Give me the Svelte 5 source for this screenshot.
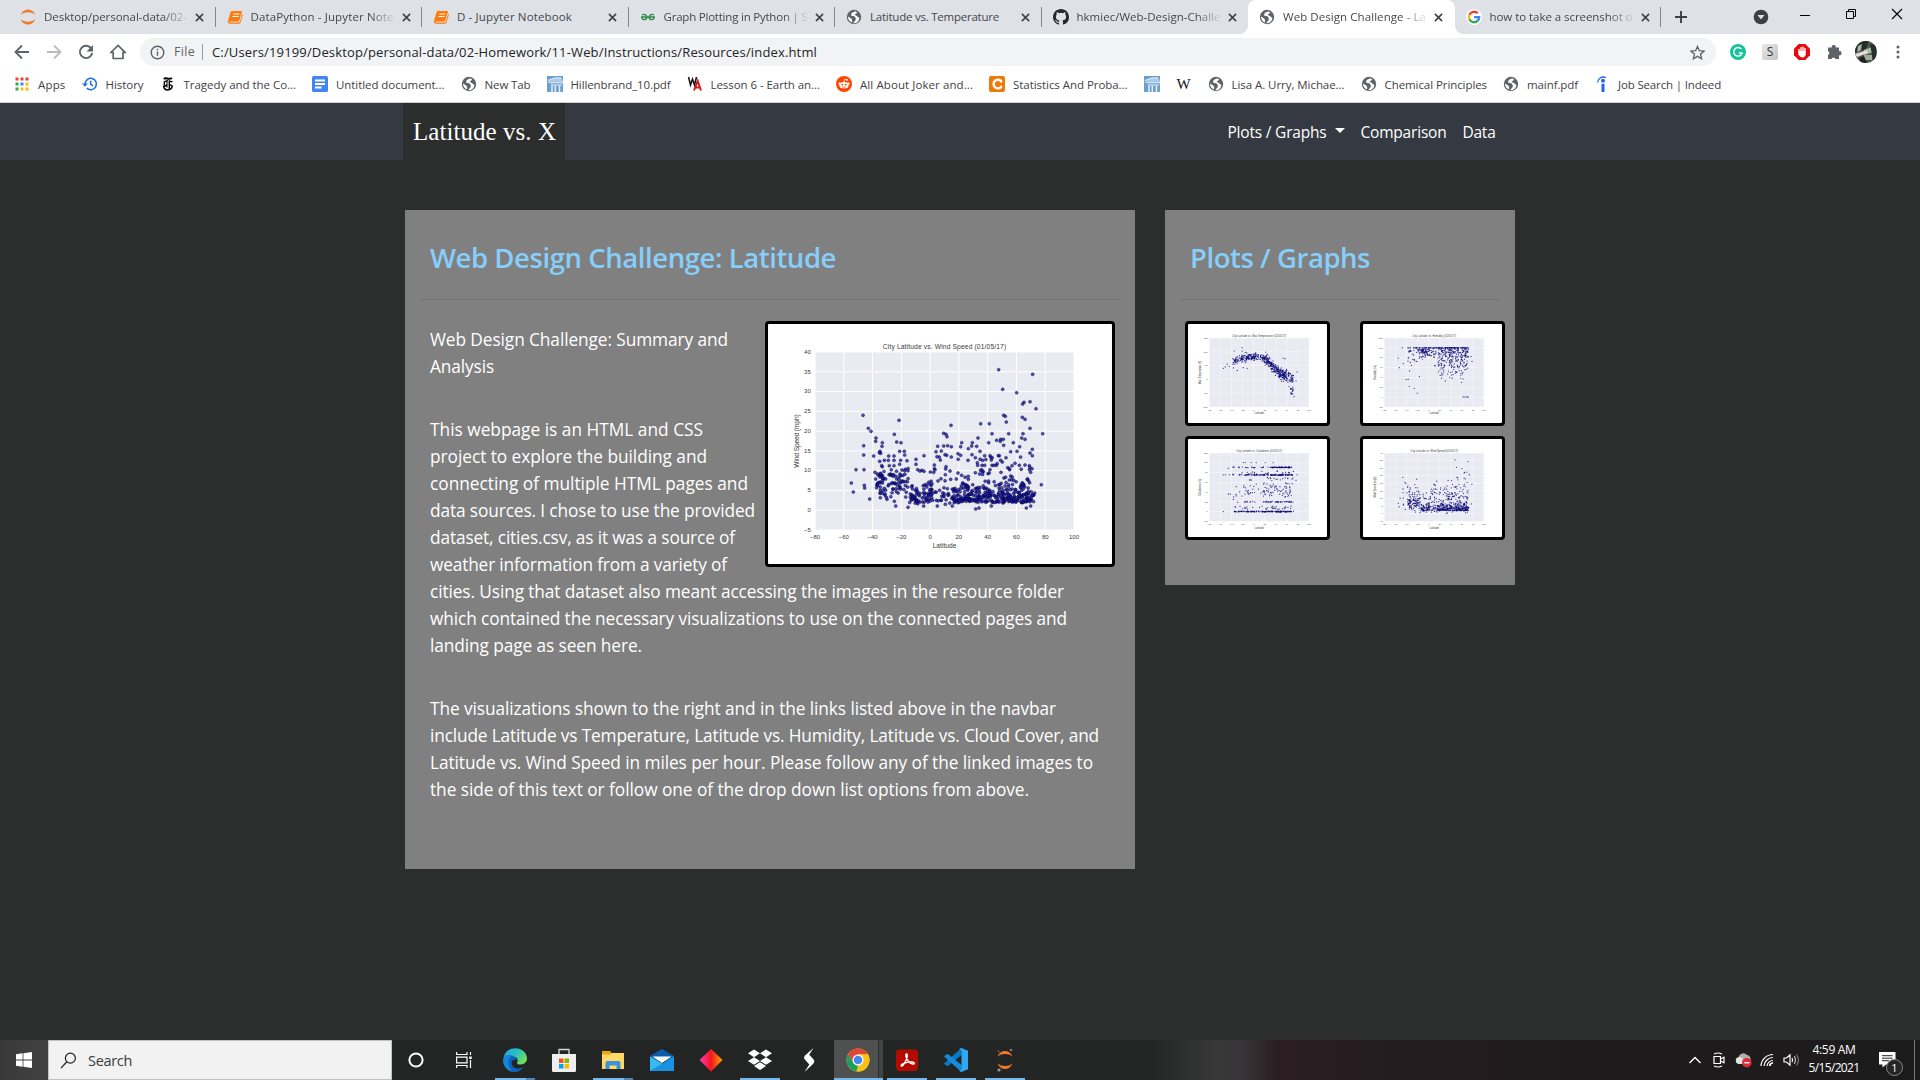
<script>
  // Stretches a single line of text to the given width through its letter spacing.
  function fit(node, width) {
    const natural = node.getBoundingClientRect().width;
    node.style.letterSpacing = (width - natural) / node.textContent.length + 'px';
  }

  const tabs = [
    { icon: 'jupyter', title: 'Desktop/personal-data/02-', w: 143, fade: true },
    { icon: 'book', title: 'DataPython - Jupyter Note', w: 143, fade: true },
    { icon: 'book', title: 'D - Jupyter Notebook', w: 115 },
    { icon: 'gfg', title: 'Graph Plotting in Python | S', w: 144, fade: true },
    { icon: 'globe', title: 'Latitude vs. Temperature', w: 129 },
    { icon: 'github', title: 'hkmiec/Web-Design-Challe', w: 144, fade: true },
    { icon: 'globe', title: 'Web Design Challenge - La', w: 143, fade: true, active: true },
    { icon: 'google', title: 'how to take a screenshot o', w: 143, fade: true }
  ];

  const bookmarks = [
    { icon: 'apps', label: 'Apps', w: 27.500 },
    { icon: 'history', label: 'History', w: 38 },
    { icon: 'times', label: 'Tragedy and the Co...', w: 112.500 },
    { icon: 'docs', label: 'Untitled document...', w: 108.500 },
    { icon: 'globe', label: 'New Tab', w: 46 },
    { icon: 'columns', label: 'Hillenbrand_10.pdf', w: 100 },
    { icon: 'wa', label: 'Lesson 6 - Earth an...', w: 109.500 },
    { icon: 'reddit', label: 'All About Joker and...', w: 113 },
    { icon: 'course', label: 'Statistics And Proba...', w: 114.500 },
    { icon: 'columns' },
    { icon: 'wiki' },
    { icon: 'globe', label: 'Lisa A. Urry, Michae...', w: 113 },
    { icon: 'globe', label: 'Chemical Principles', w: 102.500 },
    { icon: 'globe', label: 'mainf.pdf', w: 51 },
    { icon: 'indeed', label: 'Job Search | Indeed', w: 103 }
  ];

  const paragraphs = [
    [
      ['Web Design Challenge: Summary and', 298],
      ['Analysis', 64]
    ],
    [
      ['This webpage is an HTML and CSS', 273],
      ['project to explore the building and', 277],
      ['connecting of multiple HTML pages and', 318],
      ['data sources. I chose to use the provided', 325],
      ['dataset, cities.csv, as it was a source of', 305],
      ['weather information from a variety of', 297],
      ['cities. Using that dataset also meant accessing the images in the resource folder', 634],
      ['which contained the necessary visualizations to use on the connected pages and', 637],
      ['landing page as seen here.', 212]
    ],
    [
      ['The visualizations shown to the right and in the links listed above in the navbar', 626],
      ['include Latitude vs Temperature, Latitude vs. Humidity, Latitude vs. Cloud Cover, and', 669],
      ['Latitude vs. Wind Speed in miles per hour. Please follow any of the linked images to', 663],
      ['the side of this text or follow one of the drop down list options from above.', 599]
    ]
  ];

  const apps = [
    { icon: 'edge', run: 'stack' },
    { icon: 'store' },
    { icon: 'explorer', run: 'stack' },
    { icon: 'mail' },
    { icon: 'diamond' },
    { icon: 'dropbox', run: 'single' },
    { icon: 'slash' },
    { icon: 'chrome', run: 'focus' },
    { icon: 'acrobat', run: 'single' },
    { icon: 'vscode', run: 'single' },
    { icon: 'jupyterDark', run: 'single' }
  ];

  // Seeded generator, so that the clouds of points are stable between loads.
  function rng(seed) {
    return () => {
      seed = (seed + 0x6d2b79f5) | 0;
      let t = Math.imul(seed ^ (seed >>> 15), 1 | seed);
      t = (t + Math.imul(t ^ (t >>> 7), 61 | t)) ^ t;
      return ((t ^ (t >>> 14)) >>> 0) / 4294967296;
    };
  }
  const gaussian = (r) => r() + r() + r() + r() - 2;

  // City latitudes: x as a fraction of the -80..100 axis.
  function latitude(r) {
    const k = r();
    if (k < 0.04) return 0.235 + r() * 0.04;
    if (k < 0.12) return 0.28 + r() * 0.08;
    if (k < 0.27) return 0.365 + r() * 0.09;
    if (k < 0.34) return 0.45 + r() * 0.09;
    return 0.535 + r() * 0.31;
  }

  function windPoints() {
    const known = `339,316 355,355 363,364 378,384 377,394 341,407 397,398 341,435 396,409 371,438 318,479 342,479 304,519 310,546 343,526 344,534 359,567 447,331 433,373 440,396 453,398 416,438 432,438 449,424 463,424 464,435 403,451 415,451 432,451 452,451 471,452 418,467 432,467 449,463 375,487 386,496 395,498 377,507 390,424 392,430 388,428 389,454 395,467 397,470 407,507 422,493 438,499 498,448 498,463 522,437 521,588 474,592 437,588 603,346 581,370 588,373 591,380 563,409 581,408 593,407 604,410 558,425 574,423 585,434 561,440 568,441 604,441 571,450 553,465 553,476 588,470 587,477 600,483 586,494 590,436 692,341 718,341 684,384 635,398 632,410 655,416 667,398 665,408 680,409 624,431 632,436 666,434 690,424 654,451 676,443 682,458 683,466 716,398 726,371 746,179 758,238 848,193 800,248 840,275 822,277 818,282 858,296 761,316 766,319 817,322 825,328 769,336 840,355 878,371 819,371 776,371 815,384 825,388 740,391 752,388 760,388 751,394 761,406 790,398 809,410 847,418 840,429 847,437 801,424 782,425 704,437 720,437 724,450 745,437 768,443 795,460 808,466 825,465 838,467 838,479 846,476 842,487 874,524 854,549 829,594 842,588 677,597 687,594 586,583 607,588 562,588 724,588 748,437 752,451 757,456 726,466 739,466 732,466 704,466 698,451 696,466 773,473 786,467 779,479 753,487 720,479 714,491 695,479 676,488 624,489 635,496 655,508 602,508 619,507 391,531 391,540 391,518 391,563 405,552 411,568 409,562 426,548 439,545 467,561 433,574 449,528 452,518 440,507 427,518 435,520 503,479 510,483 516,481 522,484 541,486 551,487 555,479 474,482 466,478`
      .split(' ')
      .map((p) => p.split(',').map(Number))
      .map(([x, y]) => [(x - 195) / 777, (y - 126) / 534]);
    const r = rng(11);
    const rows = [];
    for (let i = 0; i < 490; i++) {
      const x = latitude(r);
      const tropics = x > 0.36 && x < 0.53;
      let w = 2 - (r() < 0.62 ? 1.9 : 4.3) * Math.log(1 - r() * 0.95);
      if (tropics) w = 1.9 + Math.abs(gaussian(r)) * 4.2;
      if (x < 0.36) w = 5 + gaussian(r) * 2.4 + r() * 4;
      if (x >= 0.36 && x < 0.45 && w > 8.5) w = 3 + r() * 4;
      w += gaussian(r) * 0.25;
      if (w < 1.6) w = 2 + r() * 2;
      if (w > 14) w = 3 + r() * 6;
      rows.push([x, (40 - w) / 45]);
    }
    return [...known, ...rows];
  }

  function temperaturePoints() {
    const r = rng(5);
    const out = [];
    const curve = [[0.14, 0.43], [0.25, 0.34], [0.36, 0.285], [0.48, 0.27], [0.56, 0.3], [0.62, 0.39], [0.7, 0.5], [0.78, 0.56], [0.85, 0.58]];
    for (let i = 0; i < 520; i++) {
      const x = latitude(r);
      let k = 1;
      while (k < curve.length - 1 && curve[k][0] < x) k++;
      const [a, b] = [curve[k - 1], curve[k]];
      let y = a[1] + ((x - a[0]) / (b[0] - a[0])) * (b[1] - a[1]);
      y += gaussian(r) * (x > 0.56 ? 0.07 : 0.05);
      if (x > 0.78 && r() < 0.4) y += r() * 0.24;
      out.push([x, Math.min(y, 0.81)]);
    }
    out.push([0.33, 0.14], [0.25, 0.19], [0.33, 0.19], [0.36, 0.21], [0.14, 0.44], [0.16, 0.42], [0.18, 0.38], [0.2, 0.41], [0.28, 0.47], [0.34, 0.43], [0.38, 0.44], [0.74, 0.29], [0.76, 0.3], [0.88, 0.49], [0.87, 0.62], [0.85, 0.85]);
    return out;
  }

  function humidityPoints() {
    const r = rng(21);
    const out = [];
    for (let i = 0; i < 460; i++) {
      const x = latitude(r);
      const k = r();
      let y = 0.142;
      if (k > 0.2) y = 0.15 + Math.abs(gaussian(r)) * (x > 0.36 && x < 0.5 ? 0.13 : x > 0.5 ? 0.32 : 0.24);
      if (x > 0.8 && y > 0.48) y = 0.2 + r() * 0.25;
      out.push([x, Math.min(y, 0.7)]);
    }
    for (let i = 0; i < 45; i++) out.push([0.31 + r() * 0.54, 0.142]);
    out.push([0.18, 0.14], [0.14, 0.29], [0.15, 0.43], [0.19, 0.37], [0.22, 0.6], [0.24, 0.6], [0.25, 0.7], [0.3, 0.73], [0.33, 0.8], [0.79, 0.855], [0.81, 0.855], [0.83, 0.855], [0.84, 0.855], [0.87, 0.27], [0.88, 0.34]);
    return out;
  }

  function cloudPoints() {
    const r = rng(8);
    const out = [];
    const levels = [[0.857, 150], [0.8, 34], [0.714, 48], [0.62, 22], [0.57, 34], [0.51, 25], [0.46, 15], [0.38, 18], [0.32, 105], [0.285, 26], [0.21, 85]];
    for (const [y, n] of levels) {
      for (let i = 0; i < n; i++) {
        const solid = y === 0.857 || y === 0.32 || y === 0.714 || y === 0.21;
        const x = y === 0.21 && i < 40 ? 0.62 + r() * 0.2 : latitude(r);
        out.push([x, y + (solid ? (r() - 0.5) * 0.012 : (r() - 0.5) * 0.05)]);
      }
    }
    out.push([0.14, 0.32], [0.16, 0.32], [0.2, 0.32], [0.34, 0.14], [0.36, 0.14], [0.42, 0.14], [0.47, 0.14], [0.56, 0.14], [0.64, 0.14], [0.19, 0.225], [0.88, 0.32], [0.87, 0.4], [0.14, 0.857], [0.19, 0.6], [0.21, 0.6], [0.24, 0.68]);
    return out;
  }

  const wind = windPoints();
  const xTicks = ['−80', '−60', '−40', '−20', '0', '20', '40', '60', '80', '100'];
  const windTicks = ['40', '35', '30', '25', '20', '15', '10', '5', '0', '−5'];
  const percentTicks = ['120', '100', '80', '60', '40', '20', '0', '−20'];

  const mainPlot = {
    w: 1032, h: 720, x: 141, y: 84, pw: 777, ph: 534, r: 4.5, font: 18, head: 20,
    title: 'City Latitude vs. Wind Speed (01/05/17)', titleW: 370, yLabel: 'Wind Speed (mph)', yW: 160, ticks: windTicks, points: wind
  };
  const small = { w: 417, h: 297, x: 64, y: 42, pw: 299, ph: 207, r: 1.9, font: 7, head: 8, small: true };
  const thumbs = [
    { ...small, title: 'City Latitude vs. Max Temperature (01/05/17)', titleW: 162, yLabel: 'Max Temperature (F)', yW: 70, ticks: ['150', '100', '50', '0', '−50', '−100'], points: temperaturePoints() },
    { ...small, title: 'City Latitude vs. Humidity (01/05/17)', titleW: 132, yLabel: 'Humidity (%)', yW: 44, ticks: percentTicks, points: humidityPoints() },
    { ...small, h: 294, ph: 205, title: 'City Latitude vs. Cloudiness (01/05/17)', titleW: 138, yLabel: 'Cloudiness (%)', yW: 52, ticks: percentTicks, points: cloudPoints() },
    { ...small, h: 294, ph: 205, title: 'City Latitude vs. Wind Speed (01/05/17)', titleW: 142, yLabel: 'Wind Speed (mph)', yW: 64, ticks: windTicks, points: wind }
  ];
</script>

{#snippet plot(c)}
  <svg class="plot" class:mini={c.small} viewBox="0 0 {c.w} {c.h}" preserveAspectRatio="none">
    <rect x={c.x} y={c.y} width={c.pw} height={c.ph} fill="#eaeaf2" />
    {#each xTicks as t, i}
      {@const x = c.x + (c.pw * i) / 9}
      <line class="grid" x1={x} x2={x} y1={c.y} y2={c.y + c.ph} />
      <text x={x} y={c.y + c.ph + c.font * 1.5} font-size={c.font} text-anchor="middle">{t}</text>
    {/each}
    {#each c.ticks as t, i}
      {@const y = c.y + (c.ph * i) / (c.ticks.length - 1)}
      <line class="grid" x1={c.x} x2={c.x + c.pw} y1={y} y2={y} />
      <text x={c.x - c.font * 0.7} y={y + c.font * 0.3} font-size={c.font} text-anchor="end">{t}</text>
    {/each}
    {#each c.points as [px, py]}
      <circle cx={c.x + px * c.pw} cy={c.y + py * c.ph} r={c.r} />
    {/each}
    <text x={c.x + c.pw / 2} y={c.y - c.head * 0.48} font-size={c.head} text-anchor="middle" textLength={c.titleW}>{c.title}</text>
    <text x={c.x + c.pw / 2} y={c.y + c.ph + c.head * 2.7} font-size={c.head} text-anchor="middle">Latitude</text>
    <text transform="translate({c.x - c.head * (c.small ? 3.1 : 2.4)} {c.y + c.ph / 2}) rotate(-90)" font-size={c.head} text-anchor="middle" textLength={c.yW}>{c.yLabel}</text>
  </svg>
{/snippet}

{#snippet icon(name)}
  {#if name === 'jupyter'}
    <svg viewBox="0 0 16 16" width="16" height="16"><path d="M.7 6C1.8 2.6 4.6.5 8 .5s6.200 2.100 7.300 5.500C13.500 4.200 11 3.200 8 3.200S2.500 4.200.7 6zM.7 10c1.100 3.400 3.900 5.500 7.300 5.500s6.200-2.100 7.300-5.500c-1.800 1.800-4.300 2.800-7.300 2.800S2.500 11.800.7 10z" fill="#f37726" /></svg>
  {:else if name === 'jupyterDark'}
    <svg viewBox="0 0 24 24" width="24" height="24"><path d="M4.500 8.500C6.200 4.800 8.900 3 12 3s5.800 1.800 7.500 5.500C17.500 6.800 15 6 12 6s-5.500.8-7.500 2.500zM4.500 15.500c1.700 3.700 4.400 5.500 7.500 5.500s5.800-1.800 7.500-5.500c-2 1.700-4.500 2.500-7.500 2.500s-5.500-.8-7.500-2.500z" fill="#f37726" /><circle cx="18" cy="2" r="1.300" fill="#777" /><circle cx="6" cy="22" r="1.600" fill="#999" /><circle cx="5.500" cy="3.500" r=".9" fill="#777" /></svg>
  {:else if name === 'book'}
    <svg viewBox="0 0 16 16" width="16" height="16"><path d="M5 2h9.200c.6 0 .9.400.7 1l-2.700 8.800c-.1.400-.5.700-1 .7H2.800c-.8 0-.8 1.100 0 1.100h9c.5 0 .8-.3 1-.7l2.400-8c.7.400.7.9.5 1.600l-2.200 7c-.3.800-1 1.300-1.900 1.300H3c-1.500 0-2.500-1.300-2-2.700L3.500 3.400C3.700 2.500 4.300 2 5 2z" fill="#ff7a0c" /><path d="M6.300 5h6.200M5.500 7.500h6.200" stroke="#fff" stroke-width="1" /></svg>
  {:else if name === 'gfg'}
    <svg viewBox="0 0 16 16" width="14" height="14"><path d="M1.200 5.600c2-1.200 5-.6 5.400 2.400H0m6.600 0c.2 3.800-5.200 4-5.400.7M14.800 5.600c-2-1.200-5-.6-5.400 2.400H16m-6.600 0c-.2 3.800 5.200 4 5.400.7M6 8h4" fill="none" stroke="#2f8d46" stroke-width="1.600" /></svg>
  {:else if name === 'globe'}
    <svg viewBox="0 0 16 16" width="16" height="16"><circle cx="8" cy="8" r="7.200" fill="#5f6368" /><path d="M9.300 2.200 5.600 4.100l-.5 2.600 3.300.6 1.500 2.200-.5 1.900-2.200 2.700c3 .4 6-1.800 6.200-5.200L11 7.200 8.600 5.500l2.800-1.700zM2 7.500l3.500 2.200.8 2.400-.7 1.300C3.300 12.300 1.900 10 2 7.500z" fill="#fff" /></svg>
  {:else if name === 'github'}
    <svg viewBox="0 0 16 16" width="16" height="16"><path fill="#24292e" d="M8 0C3.580 0 0 3.580 0 8c0 3.540 2.290 6.530 5.470 7.590.4.070.55-.17.55-.38 0-.19-.01-.82-.01-1.490-2.010.37-2.530-.49-2.690-.94-.09-.23-.48-.94-.82-1.130-.28-.15-.68-.52-.01-.53.63-.01 1.080.58 1.230.82.72 1.210 1.870.87 2.330.66.070-.52.28-.87.51-1.070-1.780-.2-3.640-.89-3.640-3.950 0-.87.31-1.590.82-2.150-.08-.2-.36-1.020.08-2.120 0 0 .67-.21 2.200.82a7.600 7.600 0 0 1 4 0c1.530-1.040 2.200-.82 2.200-.82.44 1.100.16 1.920.08 2.120.51.56.82 1.270.82 2.150 0 3.070-1.870 3.750-3.650 3.950.29.25.54.73.54 1.480 0 1.070-.01 1.930-.01 2.200 0 .21.15.46.55.38A8 8 0 0 0 16 8c0-4.420-3.580-8-8-8z" /></svg>
  {:else if name === 'google'}
    <svg viewBox="0 0 16 16" width="16" height="16"><circle cx="8" cy="8" r="8" fill="#fff" /><g fill="none" stroke-width="2.400"><path d="M11.700 4.200A5.200 5.200 0 0 0 3.400 5.700" stroke="#ea4335" /><path d="M3.400 5.700a5.200 5.200 0 0 0 0 4.700" stroke="#fbbc05" /><path d="M3.400 10.400a5.200 5.200 0 0 0 8.100 1.500" stroke="#34a853" /><path d="M8 8.100h5.200a5.200 5.200 0 0 1-1.700 3.800" stroke="#4285f4" /></g></svg>
  {:else if name === 'apps'}
    <svg viewBox="0 0 16 16" width="16" height="16">{#each ['#ea4335', '#ea4335', '#ea4335', '#34a853', '#4285f4', '#fbbc05', '#34a853', '#fbbc05', '#fbbc05'] as f, i}<rect x={1.500 + (i % 3) * 5} y={1.500 + Math.floor(i / 3) * 5} width="3" height="3" fill={f} />{/each}</svg>
  {:else if name === 'history'}
    <svg viewBox="0 0 16 16" width="16" height="16" fill="none" stroke="#1a73e8" stroke-width="1.600"><path d="M3 8a5.700 5.700 0 1 1 1.800 4.200M8.700 4.800v3.600l2.500 1.500" /><path d="M0 7.500h5.800L3 10.800z" fill="#1a73e8" stroke="none" /></svg>
  {:else if name === 'times'}
    <svg viewBox="0 0 16 16" width="16" height="16" fill="none" stroke="#000"><path d="M4 3.200c1.500-2.400 4.500 1 8-1.200" stroke-width="2" /><path d="M4.300 5.600c1.800-.4 2.700-.8 3.400-1.400M4.300 5.500v4M9.300 4.200v9M9.300 5.200c1.500 0 2.200.8 3.200.3" stroke-width="1.400" /><path d="M7 5v6.500" stroke-width="1.100" /><path d="M3.700 9.800c-.3 5.400 7.500 5.400 8.600.4-.9-1-1.600-1.500-3-1.500M4 10.500 7 9" stroke-width="1.500" /></svg>
  {:else if name === 'docs'}
    <svg viewBox="0 0 16 16" width="16" height="16"><rect width="16" height="16" rx="1.500" fill="#4285f4" /><path d="M3 4.500h10M3 8h10M3 11.500h6.500" stroke="#fff" stroke-width="1.800" /></svg>
  {:else if name === 'columns'}
    <svg viewBox="0 0 16 16" width="16" height="16"><rect width="16" height="16" fill="#6b9fce" /><path d="M0 6.500 7 2l7-.5L16 5v1.500z" fill="#a9c9e6" /><path d="M1 4.500 8 2h6M2 6.800h14M4 9h11" stroke="#e6f1fa" stroke-width="1.100" fill="none" /><path d="M5 9.500V16M8.300 9.500V16M12.500 9.500V16" stroke="#e3eef8" stroke-width="1.500" /></svg>
  {:else if name === 'wa'}
    <svg viewBox="0 0 16 16" width="16" height="16" fill="none"><path d="m1.500 1 2 8 2-6 2 6 2-8" stroke="#111" stroke-width="1.500" /><path d="m7 14.500 3.700-9.500 3.300 9.500M8.500 11.500h4.500" stroke="#d31c1c" stroke-width="2" /></svg>
  {:else if name === 'reddit'}
    <svg viewBox="0 0 16 16" width="16" height="16"><circle cx="8" cy="8" r="8" fill="#ff4500" /><ellipse cx="8" cy="9.200" rx="4.600" ry="3.300" fill="#fff" /><circle cx="3.600" cy="7.600" r="1.200" fill="#fff" /><circle cx="12.400" cy="7.600" r="1.200" fill="#fff" /><path d="M8 6l.7-2.700 2.200.5" stroke="#fff" fill="none" stroke-width=".8" /><circle cx="11.200" cy="3.900" r=".9" fill="#fff" /><circle cx="6.200" cy="8.600" r=".9" fill="#ff4500" /><circle cx="9.800" cy="8.600" r=".9" fill="#ff4500" /><path d="M6 10.700q2 1.300 4 0" stroke="#ff4500" stroke-width=".7" fill="none" /></svg>
  {:else if name === 'course'}
    <svg viewBox="0 0 16 16" width="16" height="16"><rect width="16" height="16" rx="2" fill="#ee7a0b" /><path d="M12 6.500V4.700C9 2.700 4.600 4 4.600 8s4.400 5.500 7.400 3.400V9.800" fill="none" stroke="#fff" stroke-width="2.300" /></svg>
  {:else if name === 'wiki'}
    <span class="wiki">W</span>
  {:else if name === 'indeed'}
    <svg viewBox="0 0 16 16" width="16" height="16"><circle cx="9" cy="4.700" r="2" fill="#2164f3" /><path d="M9 7.800V16" stroke="#2164f3" stroke-width="3" /><path d="M3.500 6.500C4.200 2 8 0 12 1.500" fill="none" stroke="#2164f3" stroke-width="1.300" /></svg>
  {:else if name === 'edge'}
    <svg viewBox="0 0 24 24" width="24" height="24"><defs><linearGradient id="eg" x1="0" y1="0" x2="1" y2=".5"><stop offset="0" stop-color="#249fe0" /><stop offset=".6" stop-color="#2bc3be" /><stop offset="1" stop-color="#6fdd56" /></linearGradient></defs><path d="M.5 11C1 4.500 6 .2 12.300.2 19 .2 24 5 24 10.300c0 4-3 6.200-6.300 6.200-2.700 0-4.200-1-3.500-2.200 1.800-3-1-6.100-4.900-5.500C4.500 6.200 1.500 8 .5 11z" fill="url(#eg)" /><path d="M.2 12C.5 7.500 5.500 6 9 7.400c3 1.100 4.600 3 4.400 5-3.700-1.900-5.400 1.200-4.500 4 1.200 4 6.400 5.300 11.600 2.500C18.500 22 15.500 24 12 24 5 24-.3 18.500.2 12z" fill="#0e62bd" /><path d="M.2 12C.5 7.500 5.500 6 9 7.400c-4.500 2.300-4.700 9.500-.5 14.800L9 23.600C3.600 22.400 0 17.500.2 12z" fill="#1685dc" /></svg>
  {:else if name === 'store'}
    <svg viewBox="0 0 24 24" width="24" height="24"><path d="M7 7V1.500h10V7" fill="none" stroke="#d8d8d8" stroke-width="1.300" /><path d="M0 6h24v16.500a1.500 1.500 0 0 1-1.500 1.500h-21A1.500 1.500 0 0 1 0 22.500z" fill="#efefef" /><path d="M7 10.500h4.500V15H7z" fill="#f25022" /><path d="M12.500 10.500H17V15h-4.500z" fill="#7fba00" /><path d="M7 16h4.500v4.500H7z" fill="#00a4ef" /><path d="M12.500 16H17v4.500h-4.500z" fill="#ffb900" /></svg>
  {:else if name === 'explorer'}
    <svg viewBox="0 0 24 24" width="24" height="24"><path d="M1 3h8l2 2.500h12V21H1z" fill="#f0a30f" /><path d="M1 6.500h8l2-1.500h12v16H1z" fill="#ffd868" /><path d="M4.500 21v-6q0-2 2-2h11q2 0 2 2v6h-4v-3.500h-7V21z" fill="#3a94dc" /></svg>
  {:else if name === 'mail'}
    <svg viewBox="0 0 24 24" width="24" height="24"><path d="M0 8 12 1l12 7v5H0z" fill="#0b5cab" /><path d="M0 8.500 13 16 24 8.500V23H0z" fill="#38baf1" /><path d="M0 23 24 8.500V23z" fill="#1a92e0" /><path d="M2.500 8.500h19L12 15z" fill="#fff" /></svg>
  {:else if name === 'diamond'}
    <svg viewBox="0 0 24 24" width="24" height="24"><defs><linearGradient id="dg"><stop offset="0" stop-color="#ff3db5" /><stop offset=".5" stop-color="#f5141e" /><stop offset="1" stop-color="#ffa400" /></linearGradient></defs><path d="M12 1 23.500 12 12 23.500.5 12z" fill="url(#dg)" /></svg>
  {:else if name === 'dropbox'}
    <svg viewBox="0 0 24 24" width="24" height="24" fill="#fff"><path d="m6 1.500 6 3.800-6 3.900-6-3.900zM18 1.500l6 3.800-6 3.900-6-3.900zM6 9.200l6 3.800-6 3.800L0 13zM18 9.200l6 3.800-6 3.800-6-3.800zM12 14.300l6 3.800-6 3.900-6-3.900z" /></svg>
  {:else if name === 'slash'}
    <svg viewBox="0 0 24 24" width="24" height="24" fill="#fff"><path d="M16.500 0 8 7.500c-1.500 1.500-1 3 .3 4.500l4 4.500L7.500 24l8.500-8c2-2 1.500-3.500 0-5.200l-3.800-4z" /></svg>
  {:else if name === 'chrome'}
    <svg viewBox="0 0 24 24" width="24" height="24"><circle cx="12" cy="12" r="11.500" fill="#fbc116" /><path d="M2 6.300A11.500 11.500 0 0 1 22 6.300H12L7 15z" fill="#e0473a" /><path d="M2 6.300 7.200 15 12 17.500l-1.600 5.900A11.500 11.500 0 0 1 2 6.300z" fill="#1ba15f" /><path d="M12 6.300h10a11.500 11.500 0 0 1-11.200 17.100L17 14.500z" fill="#fbc116" /><circle cx="12" cy="12" r="5.500" fill="#fff" /><circle cx="12" cy="12" r="4.300" fill="#4587f0" /></svg>
  {:else if name === 'acrobat'}
    <svg viewBox="0 0 24 24" width="24" height="24"><rect x="1" y="1.500" width="22" height="21.500" rx="4" fill="#b30b00" /><path d="M11.600 6c-1.600 0-.5 4.500 1.800 7.300 2 2.500 5.800 3.600 5.900 2 .1-1.700-4.400-1.700-8-.7-3.200.9-5.800 2.300-5 3.300 1 1.200 3.300-2.500 4.700-5.700 1.400-3.300 1.700-6.200.6-6.200z" fill="none" stroke="#fff" stroke-width="1.400" /></svg>
  {:else if name === 'vscode'}
    <svg viewBox="0 0 24 24" width="24" height="24"><path d="M17.500 0v7L4 18 1.500 17 0 15.500z" fill="#0879c7" /><path d="M0 8.500 1.500 7 4 6l13.500 11v7z" fill="#168bd8" /><path d="M17.500 0 24 2.800v18.400L17.500 24l-2.500-1 2.500-1.500v-19L15 1z" fill="#2fa9f3" /></svg>
  {/if}
{/snippet}

<div class="screen">
  <header class="browser">
    <div class="tabstrip">
      {#each tabs as tab, i}
        <div class="tab" class:active={tab.active} class:plain={i === 5}>
          <span class="favicon">{@render icon(tab.icon)}</span>
          <span class="title" class:fade={tab.fade}><span class="line" use:fit={tab.w}>{tab.title}</span></span>
          <svg class="x" viewBox="0 0 10 10" width="9" height="9"><path d="m1 1 8 8M9 1 1 9" stroke="#3c4043" stroke-width="1.700" /></svg>
        </div>
      {/each}
      <svg class="plus" viewBox="0 0 14 14" width="14" height="14"><path d="M7 1v12M1 7h12" stroke="#3c4043" stroke-width="1.900" /></svg>
      <div class="window">
        <svg viewBox="0 0 16 16" width="16" height="16"><circle cx="8" cy="8" r="7.300" fill="#3c4043" /><path d="M4.500 6h7L8 10.500z" fill="#dee1e6" /></svg>
        <svg viewBox="0 0 12 12" width="12" height="12"><path d="M1 7.500h10" stroke="#000" /></svg>
        <svg viewBox="0 0 12 12" width="12" height="12"><path d="M1.500 3.500h7v7h-7zM3.500 3.500v-2h7v7h-2" fill="none" stroke="#000" /></svg>
        <svg viewBox="0 0 12 12" width="12" height="12"><path d="m1 1 10 10M11 1 1 11" stroke="#000" stroke-width="1.100" /></svg>
      </div>
    </div>

    <div class="toolbar">
      <div class="nav-buttons">
        <svg viewBox="0 0 16 16" width="16" height="16" fill="none" stroke="#5f6368" stroke-width="1.900"><path d="M15 8H2M8 1.500 1.500 8 8 14.500" /></svg>
        <svg viewBox="0 0 16 16" width="16" height="16" fill="none" stroke="#babcbe" stroke-width="1.900"><path d="M1 8h13M8 1.500 14.500 8 8 14.500" /></svg>
        <svg viewBox="0 0 16 16" width="16" height="16" fill="none" stroke="#5f6368" stroke-width="1.900"><path d="M13.300 4.500A6.200 6.200 0 1 0 14.200 9" /><path d="M15 1v6.500H8.500z" fill="#5f6368" stroke="none" /></svg>
        <svg viewBox="0 0 16 16" width="16" height="16" fill="none" stroke="#5f6368" stroke-width="1.700"><path d="M.8 8.500 8 1.500l7.200 7H13v6H3.200v-6z" /></svg>
      </div>
      <div class="omnibox">
        <svg viewBox="0 0 16 16" width="15" height="15" fill="none" stroke="#5f6368" stroke-width="1.500"><circle cx="8" cy="8" r="6.700" /><path d="M8 7v4.500M8 4v1.700" /></svg>
        <span class="scheme"><span class="line" use:fit={21}>File</span></span>
        <span class="url"><span class="line" use:fit={605}>C:/Users/19199/Desktop/personal-data/02-Homework/11-Web/Instructions/Resources/index.html</span></span>
        <svg class="star" viewBox="0 0 16 16" width="15" height="15" fill="none" stroke="#5f6368" stroke-width="1.400"><path d="m8 1.500 2 4.600 5 .4-3.800 3.300 1.200 4.900L8 12.100l-4.400 2.600 1.200-4.900L1 6.500l5-.4z" /></svg>
      </div>
      <div class="extensions">
        <svg viewBox="0 0 16 16" width="16" height="16"><circle cx="8" cy="8" r="8" fill="#15c39a" /><path d="M11.500 5.200A4.300 4.300 0 1 0 12.200 9H8.800" fill="none" stroke="#fff" stroke-width="1.400" /></svg>
        <span class="ext-s">S</span>
        <svg viewBox="0 0 16 16" width="16" height="16"><path d="M4.700 0h6.600L16 4.700v6.600L11.300 16H4.700L0 11.300V4.700z" fill="#e8090f" /><path d="M5 7.500v-2m2 2V3.700m2 3.800V3.300m2 4.200V4.500" stroke="#fff" stroke-width="1.400" stroke-linecap="round" /><path d="M4.300 7h7.400v3.500q-.5 3-3.200 3-2.300 0-4.200-3z" fill="#fff" /></svg>
        <svg viewBox="0 0 16 16" width="16" height="16"><path d="M2 3.500h3.800a2 2 0 1 1 3.900 0H13v3.700a2.100 2.100 0 1 1 0 4.100v3.700H9.500a2 2 0 0 0-3.900 0H2v-4a2 2 0 0 0 0-3.800z" fill="#5f6368" /></svg>
        <svg viewBox="0 0 22 22" width="22" height="22"><defs><clipPath id="av"><circle cx="11" cy="11" r="11" /></clipPath></defs><g clip-path="url(#av)"><path d="M0 0h22v22H0z" fill="#4c5a4f" /><path d="M0 0h14l-3 8-11 3z" fill="#252c29" /><path d="m3 5 4-2-1 6-4 2zM9 9l10-4v6L9 14z" fill="#a9b9a4" /><path d="m0 13 12-4 1 3-11 4z" fill="#eed9dc" /><path d="M9 14h8v5H9z" fill="#9fae96" /><path d="m15 3 6 1v15h-3z" fill="#262f2b" /><path d="m4 17 5-2 3 7H6z" fill="#1d2422" /></g></svg>
        <svg viewBox="0 0 16 16" width="16" height="16" fill="#5f6368"><circle cx="8" cy="3" r="1.500" /><circle cx="8" cy="8" r="1.500" /><circle cx="8" cy="13" r="1.500" /></svg>
      </div>
    </div>

    <div class="bookmarks">
      {#each bookmarks as b}
        <div class="bookmark">
          <span class="favicon">{@render icon(b.icon)}</span>
          {#if b.label}<span class="line" use:fit={b.w}>{b.label}</span>{/if}
        </div>
      {/each}
    </div>
  </header>

  <nav class="navbar">
    <div class="brand"><span class="line" use:fit={143}>Latitude vs. X</span></div>
    <div class="links">
      <span class="dropdown"><span class="line" use:fit={99}>Plots / Graphs</span><i class="caret"></i></span>
      <span class="line" use:fit={86}>Comparison</span>
      <span class="line" use:fit={33}>Data</span>
    </div>
  </nav>

  <main class="page">
    <section class="card summary">
      <h1><span class="line" use:fit={406}>Web Design Challenge: Latitude</span></h1>
      <hr />
      <div class="body">
        <figure class="frame main-figure">{@render plot(mainPlot)}</figure>
        {#each paragraphs as lines}
          <p>
            {#each lines as [text, w]}<span class="row"><span class="line" use:fit={w}>{text}</span></span>{/each}
          </p>
        {/each}
      </div>
    </section>

    <aside class="card side">
      <h1><span class="line" use:fit={180}>Plots / Graphs</span></h1>
      <hr />
      <div class="thumbs">
        {#each thumbs as t}
          <figure class="frame">{@render plot(t)}</figure>
        {/each}
      </div>
    </aside>
  </main>

  <footer class="taskbar">
    <div class="start">
      <svg viewBox="0 0 16 16" width="16" height="16" fill="#fff"><path d="M0 2.200 6.600 1.300V7.600H0zM7.400 1.200 16 0v7.600H7.400zM0 8.400h6.600v6.300L0 13.800zM7.400 8.400H16V16l-8.600-1.200z" /></svg>
    </div>
    <div class="search">
      <svg viewBox="0 0 18 18" width="17" height="17" fill="none" stroke="#222" stroke-width="1.300"><circle cx="11" cy="6.500" r="5.300" /><path d="M7.300 10.300 1 17" /></svg>
      <span class="line" use:fit={44}>Search</span>
    </div>
    <div class="sys">
      <svg viewBox="0 0 16 16" width="16" height="16"><circle cx="8" cy="8" r="6.600" fill="none" stroke="#fff" stroke-width="2" /></svg>
    </div>
    <div class="sys">
      <svg viewBox="0 0 16 16" width="16" height="16" fill="none" stroke="#fff" stroke-width="1.200"><path d="M.6 0v2.500H11V0M.6 5.200H11v5.600H.6zM.6 16v-2.500H11V16M14.500 0v3M14.500 8v8" /><path d="M13.300 4.500h2.400v2.500h-2.400z" fill="#fff" stroke="none" /></svg>
    </div>
    <div class="apps">
      {#each apps as a}
        <div class="app {a.run ?? ''}">{@render icon(a.icon)}</div>
      {/each}
    </div>
    <div class="tray">
      <span class="cell"><svg viewBox="0 0 14 14" width="14" height="14" fill="none" stroke="#fff" stroke-width="1.400"><path d="m1.500 10 5.500-5.500 5.500 5.500" /></svg></span>
      <span class="cell"><svg viewBox="0 0 14 16" width="14" height="16" fill="none" stroke="#fff" stroke-width="1.200"><path d="M2 4.500h6.500v7H2zM8.500 7 12 5.300v5.400L8.500 9M2 2Q6 0 10 2M2 14q4 2 8 0" /></svg></span>
      <span class="cell"><svg viewBox="0 0 17 16" width="17" height="16"><path d="M3.500 11.500a3.300 3.300 0 0 1 0-6.500 5 5 0 0 1 8.500-2 4 4 0 0 1 3.500 5l-3 3.500z" fill="#aeaeae" /><path d="M3.500 12a3.300 3.300 0 0 1 .3-6.500c2.500-.5 4 0 7.200 6.500z" fill="#e5e5e5" /><circle cx="11.800" cy="10.700" r="4.800" fill="#e02a35" /><path d="M9.300 10.700h5" stroke="#fff" stroke-width="1.400" /></svg></span>
      <span class="cell"><svg viewBox="0 0 14 14" width="14" height="14" fill="none" stroke="#fff" stroke-width="1.200"><path d="M1 13A12 12 0 0 1 13 1.500M4 13a9 9 0 0 1 9-8.500M7 13a6 6 0 0 1 6-5.500" /><path d="M9.700 13A3.300 3.300 0 0 1 13 10" stroke-width="1.700" /></svg></span>
      <span class="cell"><svg viewBox="0 0 17 14" width="17" height="14" fill="none" stroke="#fff" stroke-width="1.200"><path d="M1 5h2.500L7 1.800v10.400L3.500 9H1zM9 5q1.300 2 0 4" /><path d="M11.200 3.200q2.600 3.800 0 7.600" stroke="#bbb" /><path d="M13.500 1.500q4 5.500 0 11" stroke="#777" /></svg></span>
      <div class="clock">
        <span class="line" use:fit={43}>4:59 AM</span>
        <span class="line" use:fit={51}>5/15/2021</span>
      </div>
      <div class="notify">
        <svg viewBox="0 0 17 16" width="17" height="16"><path d="M0 0h16.500v12.500H7L3.500 15.500v-3H0z" fill="#fff" /><path d="M3 3.700h10.500M3 6.200h10.500M3 8.700h7" stroke="#222" stroke-width="1" /></svg>
        <span class="badge">1</span>
      </div>
      <i class="peek"></i>
    </div>
  </footer>
</div>

<style>
  :global(body) {
    background: #2c2e2d;
  }
  .screen {
    width: 1920px;
    height: 1080px;
    display: flex;
    flex-direction: column;
    overflow: hidden;
    background: #2c2e2d;
    font-family: 'Open Sans', 'Noto Sans', sans-serif;
  }
  svg {
    display: block;
    flex: none;
  }
  .line {
    display: inline-block;
    white-space: nowrap;
    flex: none;
  }

  /* Browser chrome */
  .browser {
    height: 102px;
    background: #fff;
    border-bottom: 1px solid #d0d2d5;
    color: #45484c;
    font-size: 11.500px;
  }
  .tabstrip {
    height: 34px;
    display: flex;
    align-items: center;
    background: #dee1e6;
    padding-left: 9px;
  }
  .tab {
    position: relative;
    box-sizing: border-box;
    width: 206.500px;
    height: 34px;
    flex: none;
    display: flex;
    align-items: center;
    padding-left: 11px;
  }
  .tab::after {
    content: '';
    position: absolute;
    right: 0;
    top: 7px;
    width: 1px;
    height: 20px;
    background: #85888c;
  }
  .tab.plain::after {
    display: none;
  }
  .tab.active {
    background: #fff;
    border-radius: 8px 8px 0 0;
  }
  .tab.active::before,
  .tab.active::after {
    content: '';
    position: absolute;
    top: auto;
    bottom: 0;
    width: 8px;
    height: 8px;
  }
  .tab.active::before {
    left: -8px;
    background: radial-gradient(circle at 0 0, #dee1e6 7.500px, #fff 8px);
  }
  .tab.active::after {
    right: -8px;
    background: radial-gradient(circle at 100% 0, #dee1e6 7.500px, #fff 8px);
  }
  .favicon {
    width: 16px;
    height: 16px;
    flex: none;
    display: flex;
    align-items: center;
    justify-content: center;
  }
  .title {
    width: 144px;
    margin-left: 8px;
    flex: none;
    overflow: hidden;
    line-height: 18px;
  }
  .title.fade {
    mask-image: linear-gradient(to right, #000 118px, transparent 146px);
  }
  .x {
    margin-left: 7px;
  }
  .plus {
    margin-left: 13px;
  }
  .window {
    margin-left: auto;
    padding-right: 17px;
    display: flex;
    align-items: center;
    gap: 34px;
  }
  .window svg:nth-child(1) {
    margin: 0 -4px 0 0;
  }
  .window svg:nth-child(n + 2) {
    margin-top: -6px;
  }

  .toolbar {
    height: 36px;
    display: flex;
    align-items: center;
    padding-left: 14px;
  }
  .nav-buttons {
    display: flex;
    gap: 16px;
  }
  .omnibox {
    box-sizing: border-box;
    width: 1576px;
    height: 28px;
    margin-left: 14px;
    padding: 0 11px 0 10px;
    border-radius: 14px;
    background: #f1f3f4;
    display: flex;
    align-items: center;
  }
  .scheme {
    width: 28px;
    margin-left: 9px;
    border-right: 1px solid #9a9da1;
    color: #5f6368;
    line-height: 16px;
    font-size: 12.500px;
  }
  .url {
    margin-left: 9px;
    color: #222427;
    font-size: 13px;
  }
  .star {
    margin-left: auto;
  }
  .extensions {
    display: flex;
    align-items: center;
    margin-left: 14px;
    gap: 16px;
  }
  .extensions svg:nth-child(5) {
    margin: 0 -3px 0 -3px;
  }
  .ext-s {
    width: 16px;
    height: 16px;
    border-radius: 2px;
    background: linear-gradient(135deg, #e8e8e8, #c4c4c4);
    color: #333;
    font: 12px/16px 'Open Sans', sans-serif;
    text-align: center;
  }
  .bookmarks {
    height: 28px;
    display: flex;
    align-items: center;
    gap: 16px;
    padding-left: 14px;
    color: #3f4246;
  }
  .bookmark {
    display: flex;
    align-items: center;
    gap: 8px;
    flex: none;
  }
  .wiki {
    font: 15px/16px 'Liberation Serif', serif;
    color: #111;
  }

  /* Page */
  .navbar {
    height: 57px;
    flex: none;
    display: flex;
    align-items: center;
    background: #353a42;
    color: #fff;
    padding-left: 403px;
  }
  .brand {
    box-sizing: border-box;
    width: 162px;
    height: 57px;
    padding-left: 10px;
    background: #2c2e2d;
    font: 25px/58px 'Liberation Serif', serif;
  }
  .links {
    display: flex;
    gap: 16px;
    margin-left: 662.500px;
    font-size: 15.500px;
    line-height: 57px;
    padding-top: 1px;
  }
  .dropdown {
    display: flex;
    align-items: center;
    gap: 8px;
  }
  .caret {
    border: 5px solid transparent;
    border-top-color: #fff;
    border-bottom: 0;
    margin-top: -3px;
  }
  .page {
    flex: 1;
    display: flex;
    align-items: flex-start;
    gap: 30px;
    padding: 50px 0 0 405px;
  }
  .card {
    box-sizing: border-box;
    background: #808080;
    color: #fff;
  }
  .summary {
    width: 730px;
    height: 659px;
    padding: 0 15px;
  }
  .side {
    width: 350px;
    height: 375px;
    padding: 0 15px;
  }
  h1 {
    margin: 0;
    padding: 30px 0 0 10px;
    height: 59px;
    font-size: 27.500px;
    line-height: 36px;
    font-weight: 600;
    color: #87cefa;
  }
  hr {
    margin: 0;
    border: 0;
    height: 1px;
    background: #737373;
  }
  .body {
    padding: 21px 5px 0 10px;
  }
  .frame {
    margin: 0;
    box-sizing: border-box;
    border: 3px solid #000;
    border-radius: 4px;
    background: #fff;
    overflow: hidden;
  }
  .main-figure {
    float: right;
    width: 350px;
    height: 246px;
  }
  p {
    margin: 0;
    padding: 5px 0 31px;
    font-size: 17.300px;
    line-height: 27px;
  }
  .row {
    display: block;
    height: 27px;
  }
  .thumbs {
    display: grid;
    grid-template-columns: 145px 145px;
    grid-template-rows: 105px 104px;
    gap: 10px 30px;
    padding: 21px 0 0 5px;
  }
  .plot {
    width: 100%;
    height: 100%;
    font-family: 'Liberation Sans', sans-serif;
    fill: #3a3a3a;
  }
  .plot .grid {
    stroke: #fff;
    stroke-width: 3;
  }
  .plot circle {
    fill: #1414c8;
    fill-opacity: 0.75;
    stroke: #000;
    stroke-width: 1.600;
    stroke-opacity: 0.75;
  }
  .plot.mini .grid {
    stroke-width: 1.200;
  }
  .plot.mini circle {
    fill: #0a0a78;
    stroke: none;
    fill-opacity: 0.8;
  }

  /* Taskbar */
  .taskbar {
    height: 40px;
    flex: none;
    display: flex;
    background: linear-gradient(to right, #232525 0, #232525 1150px, #383838 1215px, #383638 1240px, #2b1f23 1275px, #241c1f 1400px, #1e1b1c 1600px, #1c1b1b);
    color: #fff;
  }
  .start {
    width: 48px;
    display: flex;
    align-items: center;
    justify-content: center;
    background: linear-gradient(to right, #393939, #424242);
  }
  .search {
    box-sizing: border-box;
    width: 344px;
    border: 1px solid #c2c2c2;
    background: #f2f2f2;
    color: #3a3a3a;
    display: flex;
    align-items: center;
    gap: 11px;
    padding-left: 11px;
    font-size: 14.500px;
  }
  .sys {
    width: 48px;
    display: flex;
    align-items: center;
    justify-content: center;
  }
  .apps {
    display: flex;
    margin-left: 2.500px;
  }
  .app {
    position: relative;
    width: 49.050px;
    display: flex;
    align-items: center;
    justify-content: center;
  }
  .app::after {
    position: absolute;
    left: 4.500px;
    bottom: 0;
    width: 40px;
    height: 2px;
  }
  .app.single::after {
    content: '';
    background: #76b9ed;
  }
  .app.stack::after {
    content: '';
    background: linear-gradient(to right, #76b9ed 31px, #5286b0 31px);
  }
  .app.focus {
    background: linear-gradient(to right, #4f5150 44px, #2c2e2e 44px, #2c2e2e 45px, #434545 45px);
  }
  .app.focus::after {
    content: '';
    left: 0;
    width: 49px;
    background: #76b9ed;
  }
  .tray {
    margin-left: auto;
    display: flex;
  }
  .cell {
    width: 24px;
    display: flex;
    align-items: center;
    justify-content: center;
  }
  .clock {
    width: 62px;
    display: flex;
    flex-direction: column;
    align-items: center;
    font-size: 12px;
    line-height: 18px;
    padding-top: 1px;
  }
  .notify {
    position: relative;
    width: 49px;
    display: flex;
    align-items: center;
    padding-left: 14px;
    box-sizing: border-box;
  }
  .badge {
    position: absolute;
    left: 21px;
    top: 19px;
    width: 15px;
    height: 15px;
    border: 1px solid #8a8a8a;
    border-radius: 50%;
    background: #262526;
    font-size: 11px;
    line-height: 15px;
    text-align: center;
  }
  .peek {
    width: 5px;
    border-left: 1px solid #777;
  }
</style>
